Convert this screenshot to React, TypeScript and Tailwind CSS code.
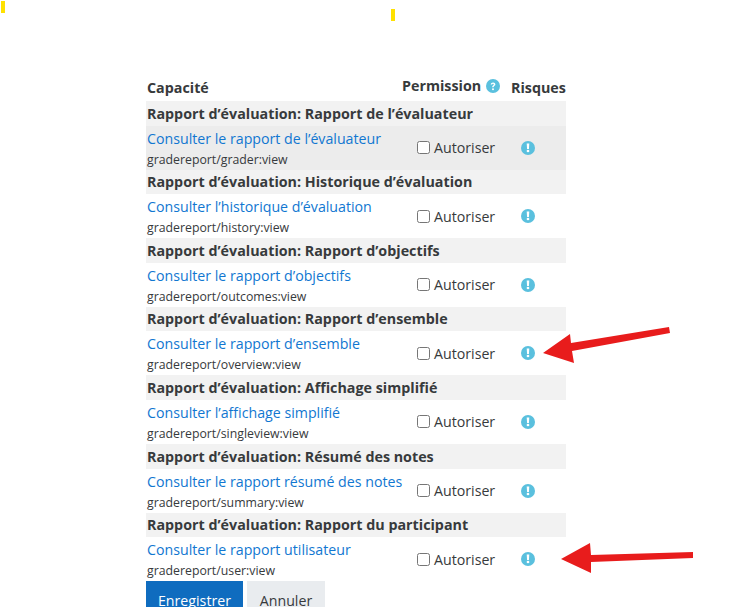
const sections = [
  { group: "Rapport d’évaluation: Rapport de l’évaluateur", name: "Consulter le rapport de l’évaluateur", cap: "gradereport/grader:view", shaded: true },
  { group: "Rapport d’évaluation: Historique d’évaluation", name: "Consulter l’historique d’évaluation", cap: "gradereport/history:view" },
  { group: "Rapport d’évaluation: Rapport d’objectifs", name: "Consulter le rapport d’objectifs", cap: "gradereport/outcomes:view" },
  { group: "Rapport d’évaluation: Rapport d’ensemble", name: "Consulter le rapport d’ensemble", cap: "gradereport/overview:view" },
  { group: "Rapport d’évaluation: Affichage simplifié", name: "Consulter l’affichage simplifié", cap: "gradereport/singleview:view" },
  { group: "Rapport d’évaluation: Résumé des notes", name: "Consulter le rapport résumé des notes", cap: "gradereport/summary:view" },
  { group: "Rapport d’évaluation: Rapport du participant", name: "Consulter le rapport utilisateur", cap: "gradereport/user:view" },
];

const RiskIcon = () => (
  <svg viewBox="0 0 14 14" className="h-[14px] w-[14px]">
    <circle cx="7" cy="7" r="7" fill="#5ac0de" />
    <path d="M5.7 2.6h2.6l-.35 5.4h-1.9z" fill="#fff" />
    <circle cx="7" cy="10" r="1.35" fill="#fff" />
  </svg>
);

const HelpIcon = () => (
  <svg viewBox="0 0 14 14" className="ml-[5px] h-[14px] w-[14px]">
    <circle cx="7" cy="7" r="7" fill="#5ac0de" />
    <path d="M4.7 5.4c.1-1.3 1.1-2 2.4-2 1.3 0 2.3.8 2.3 1.9 0 1.7-1.8 1.6-1.8 2.9H6.1c0-2 1.7-1.9 1.7-2.8 0-.4-.3-.7-.8-.7-.5 0-.8.3-.9.8z" fill="#fff" />
    <circle cx="7" cy="10.3" r="1" fill="#fff" />
  </svg>
);

const App = () => {
  return (
    <div className="relative h-[607px] w-[733px] overflow-hidden bg-white font-['Open_Sans','Noto_Sans',sans-serif] text-[#373a3c]">
      <div className="absolute left-[1px] top-[1px] h-[12px] w-[4px] bg-[#ffe100]" />
      <div className="absolute left-[391px] top-[9px] h-[12px] w-[4px] bg-[#ffe100]" />

      <div className="ml-[146px] w-[420px] pt-[75px]">
        <div className="flex h-[26px] items-center text-[14.3px] font-bold">
          <div className="w-[256px] pl-[1px]">Capacité</div>
          <div className="flex w-[109px] -translate-y-[2px] items-center whitespace-nowrap">
            Permission
            <HelpIcon />
          </div>
          <div className="whitespace-nowrap">Risques</div>
        </div>

        {sections.map((s) => (
          <div key={s.cap}>
            <div className="flex h-[24.6px] items-center bg-[#f2f2f2] pl-[1px] text-[14.3px] font-bold whitespace-nowrap">
              {s.group}
            </div>
            <div className={`flex h-[44px] items-center ${s.shaded ? "bg-[#ececec]" : "bg-white"}`}>
              <div className="w-[271px] pl-[1px]">
                <div className="text-[14.2px] leading-[23px] text-[#1177d1] whitespace-nowrap">{s.name}</div>
                <div className="text-[12.3px] leading-[19px] whitespace-nowrap">{s.cap}</div>
              </div>
              <label className="flex w-[104px] items-center text-[14.2px]">
                <input type="checkbox" className="mr-[4px] h-[13px] w-[13px]" />
                Autoriser
              </label>
              <RiskIcon />
            </div>
          </div>
        ))}

        <div className="flex gap-[4px] text-[14.2px]">
          <button className="h-[38px] w-[97px] bg-[#0f6cbf] text-white">Enregistrer</button>
          <button className="h-[38px] w-[78px] bg-[#e9ecef]">Annuler</button>
        </div>
      </div>

      <svg className="absolute left-[540px] top-[325px] h-[40px] w-[132px]" viewBox="0 0 132 40">
        <path d="M3 28 L30 9 L31 18 L129 2 L130 8 L32 26 L34 38 Z" fill="#e81c1c" />
      </svg>
      <svg className="absolute left-[560px] top-[542px] h-[32px] w-[134px]" viewBox="0 0 134 32">
        <path d="M1 17 L30 1 L31 13 L133 10 L133 16 L31 20 L31 31 Z" fill="#e81c1c" />
      </svg>
    </div>
  );
};

export default App;
